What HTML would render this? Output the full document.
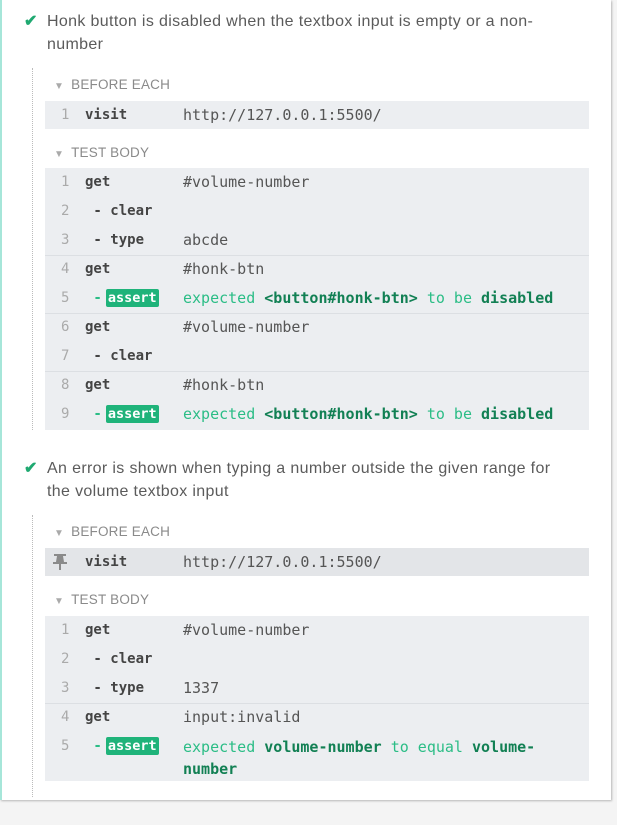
<!DOCTYPE html>
<html><head><style>
*{margin:0;padding:0;box-sizing:border-box}
body{width:617px;height:825px;background:#f4f4f4;position:relative;overflow:hidden;font-family:"Liberation Sans",sans-serif}
.panel{position:absolute;left:0;top:0;width:611px;height:800px;background:#fff;border-left:2px solid #a6e6d9;box-shadow:1px 1px 2px rgba(0,0,0,.25)}
.a{position:absolute}
.title{font-size:16px;color:#5b5b5b;line-height:23px;left:47px;width:540px;white-space:nowrap;letter-spacing:.35px}
.chk{font-size:16px;color:#1fa971;font-weight:bold}
.hdr{font-size:13.5px;color:#8a8a8a;left:54px;letter-spacing:.2px}
.hdr span{font-size:10px;margin-right:7px;color:#aaa}
.dot{border-left:1px dotted #bbb;width:0}
.blk{left:45px;width:544px;background:#eceef1}
.row{position:absolute;left:0;width:544px;height:29px;font-family:"DejaVu Sans Mono","Liberation Mono",monospace;font-size:15px;line-height:29px;color:#555}
.n{position:absolute;left:16px;color:#aaa;font-size:14px}
.c{position:absolute;left:40px;font-weight:bold;color:#444;font-size:14px}
.v{position:absolute;left:138px}
.sep{position:absolute;left:0;width:544px;height:1px;background:#dcdfe3}
.g{color:#2bbd86}
.gb{color:#128054;font-weight:bold}
.tag{background:#1fb37a;color:#fff;padding:1px 2px;border-radius:2px;font-weight:bold;margin-left:4px;font-size:13.5px}
</style></head><body>
<div class="panel"></div>
<div class="a chk" style="left:24px;top:11px">✔</div>
<div class="a title" style="top:10px">Honk button is disabled when the textbox input is empty or a non-<br>number</div>
<div class="a dot" style="left:32px;top:68px;height:362px"></div>
<div class="a hdr" style="top:77px"><span>▼</span>BEFORE EACH</div>
<div class="a blk" style="top:101px;height:28px">
 <div class="row" style="top:0"><span class="n">1</span><span class="c">visit</span><span class="v">http://127.0.0.1:5500/</span></div>
</div>
<div class="a hdr" style="top:145px"><span>▼</span>TEST BODY</div>
<div class="a blk" style="top:168px;height:262px">
 <div class="row" style="top:0"><span class="n">1</span><span class="c">get</span><span class="v">#volume-number</span></div>
 <div class="row" style="top:29px"><span class="n">2</span><span class="c">&nbsp;- clear</span></div>
 <div class="row" style="top:58px"><span class="n">3</span><span class="c">&nbsp;- type</span><span class="v">abcde</span></div>
 <div class="sep" style="top:87px"></div>
 <div class="row" style="top:87px"><span class="n">4</span><span class="c">get</span><span class="v">#honk-btn</span></div>
 <div class="row" style="top:116px"><span class="n">5</span><span class="c g">&nbsp;-<span class="tag">assert</span></span><span class="v g">expected <b class="gb">&lt;button#honk-btn&gt;</b> to be <b class="gb">disabled</b></span></div>
 <div class="sep" style="top:145px"></div>
 <div class="row" style="top:145px"><span class="n">6</span><span class="c">get</span><span class="v">#volume-number</span></div>
 <div class="row" style="top:174px"><span class="n">7</span><span class="c">&nbsp;- clear</span></div>
 <div class="sep" style="top:203px"></div>
 <div class="row" style="top:203px"><span class="n">8</span><span class="c">get</span><span class="v">#honk-btn</span></div>
 <div class="row" style="top:232px"><span class="n">9</span><span class="c g">&nbsp;-<span class="tag">assert</span></span><span class="v g">expected <b class="gb">&lt;button#honk-btn&gt;</b> to be <b class="gb">disabled</b></span></div>
</div>
<div class="a chk" style="left:24px;top:458px">✔</div>
<div class="a title" style="top:457px">An error is shown when typing a number outside the given range for<br>the volume textbox input</div>
<div class="a dot" style="left:32px;top:515px;height:282px"></div>
<div class="a hdr" style="top:524px"><span>▼</span>BEFORE EACH</div>
<div class="a blk" style="top:548px;height:28px;background:#e3e5e8">
 <div class="row" style="top:0"><svg class="a" style="left:8px;top:6px" width="14" height="16" viewBox="0 0 14 16"><rect x="1" y="0" width="12" height="2" fill="#8a8a8a"/><path d="M4 2h6l1 6H3z" fill="#8a8a8a"/><rect x="0" y="8" width="14" height="2" fill="#8a8a8a"/><rect x="6" y="10" width="2" height="6" fill="#8a8a8a"/></svg><span class="c">visit</span><span class="v">http://127.0.0.1:5500/</span></div>
</div>
<div class="a hdr" style="top:592px"><span>▼</span>TEST BODY</div>
<div class="a blk" style="top:616px;height:165px">
 <div class="row" style="top:0"><span class="n">1</span><span class="c">get</span><span class="v">#volume-number</span></div>
 <div class="row" style="top:29px"><span class="n">2</span><span class="c">&nbsp;- clear</span></div>
 <div class="row" style="top:58px"><span class="n">3</span><span class="c">&nbsp;- type</span><span class="v">1337</span></div>
 <div class="sep" style="top:87px"></div>
 <div class="row" style="top:87px"><span class="n">4</span><span class="c">get</span><span class="v">input:invalid</span></div>
 <div class="row" style="top:116px"><span class="n">5</span><span class="c g">&nbsp;-<span class="tag">assert</span></span><span class="v g" style="line-height:22px;top:4px;width:370px">expected <b class="gb">volume-</b><b class="gb">number</b> to equal <b class="gb">volume-<br>number</b></span></div>
</div>
</body></html>
